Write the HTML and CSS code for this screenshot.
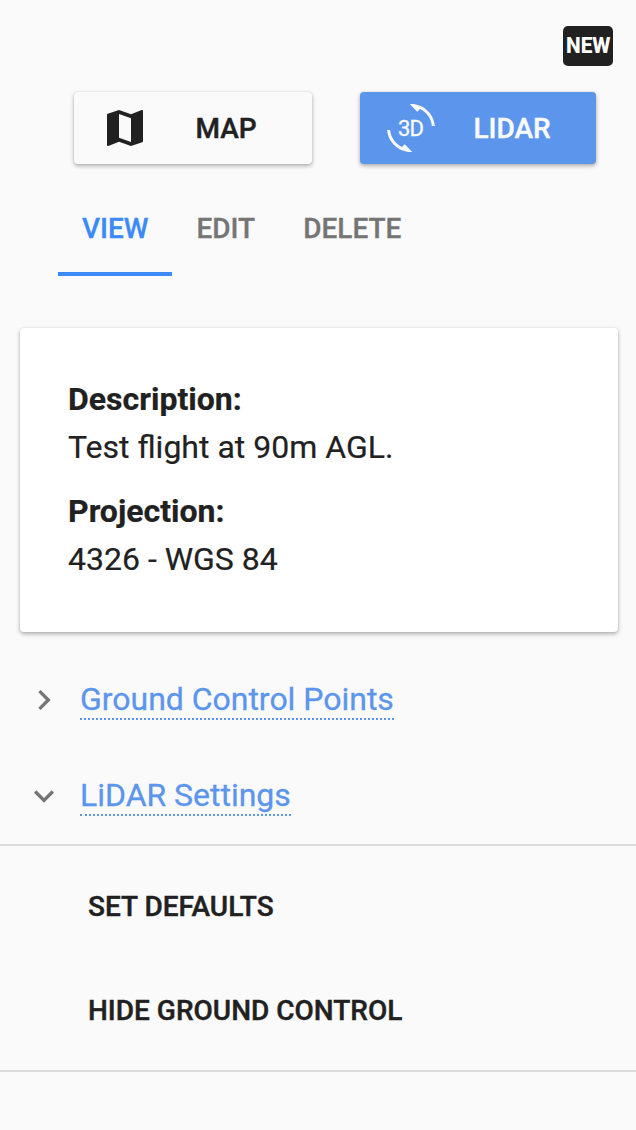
FILE: index.html
```html
<!DOCTYPE html>
<html lang="en">
<head>
<meta charset="utf-8">
<title>Flight</title>
<link rel="stylesheet" href="styles.css">
</head>
<body>
<main class="panel">
  <header class="top">
    <svg class="badge" viewBox="0 0 50 40"><text class="badge-text" x="3" y="27.3" textLength="44.5" lengthAdjust="spacingAndGlyphs">NEW</text></svg>
  </header>
  <div class="modes">
    <button class="mode mode-map">
      <svg class="mode-icon" viewBox="0 0 24 24"><path fill="currentColor" d="M20.5 3l-.16.03L15 5.1 9 3 3.36 4.9c-.21.07-.36.25-.36.48V20.5c0 .28.22.5.5.5l.16-.03L9 18.9l6 2.1 5.64-1.9c.21-.07.36-.25.36-.48V3.5c0-.28-.22-.5-.5-.5zM15 19l-6-2.11V5l6 2.11V19z"/></svg>
      <span class="mode-label">MAP</span>
    </button>
    <button class="mode mode-lidar">
      <svg class="mode-icon" viewBox="0 0 48 48"><path fill="currentColor" transform="scale(2)" d="M7.52 21.48C4.25 19.94 1.91 16.76 1.55 13H.05C.56 19.16 5.71 24 12 24l.66-.03-3.81-3.81-1.33 1.32zM12 0l-.66.03 3.81 3.81 1.33-1.33c3.27 1.55 5.61 4.72 5.96 8.48h1.5C23.44 4.84 18.29 0 12 0z"/><text class="icon-text" x="24" y="32" text-anchor="middle" textLength="26">3D</text></svg>
      <span class="mode-label">LIDAR</span>
    </button>
  </div>
  <nav class="tabs">
    <a class="tab active">VIEW</a>
    <a class="tab">EDIT</a>
    <a class="tab">DELETE</a>
  </nav>
  <section class="card">
    <p class="field"><b>Description:</b><br>Test flight at 90m AGL.</p>
    <p class="field"><b>Projection:</b><br>4326 - WGS 84</p>
  </section>
  <div class="row">
    <svg class="chevron" viewBox="0 0 24 24"><path fill="currentColor" d="M10 6L8.59 7.41 13.17 12l-4.58 4.59L10 18l6-6z"/></svg>
    <a class="link">Ground Control Points</a>
  </div>
  <div class="row">
    <svg class="chevron" viewBox="0 0 24 24"><path fill="currentColor" d="M16.59 8.59L12 13.17 7.41 8.59 6 10l6 6 6-6z"/></svg>
    <a class="link">LiDAR Settings</a>
  </div>
  <div class="settings">
    <a class="action">SET DEFAULTS</a>
    <a class="action">HIDE GROUND CONTROL</a>
  </div>
</main>
</body>
</html>
```
FILE: styles.css
```css
* { box-sizing: border-box; }
body {
  margin: 0;
  background: #fafafa;
  color: #212121;
  font-family: Roboto, "Liberation Sans", sans-serif;
}
.panel { height: 1130px; overflow: hidden; }
.top {
  display: flex;
  justify-content: flex-end;
  padding: 26px 23px 0 0;
}
.badge {
  width: 50px;
  height: 40px;
  border-radius: 5px;
  background: #212121;
}
.badge-text { font: 800 21.5px Roboto, sans-serif; fill: #fff; }
.modes {
  display: flex;
  gap: 48px;
  padding: 26px 40px 0 74px;
}
.mode {
  display: flex;
  align-items: center;
  height: 72px;
  border: 0;
  border-radius: 4px;
  padding: 0 0 0 27px;
  background: #fafafa;
  color: #212121;
  font: 500 28px/72px Roboto, sans-serif;
  box-shadow: 0 2px 4px rgba(0, 0, 0, .3), 0 0 2px rgba(0, 0, 0, .1);
}
.mode-map { width: 238px; }
.mode-lidar { width: 236px; background: #5c95ec; color: #fafafa; }
.mode-icon { width: 48px; height: 48px; flex: none; }
.mode-label {
  margin-left: 46.5px;
  padding-top: 2px;
  -webkit-text-stroke: .4px currentColor;
}
.mode-lidar .mode-label { margin-left: 38.5px; }
.icon-text { font: 400 22px Roboto, sans-serif; fill: #fafafa; stroke: #fafafa; stroke-width: .3px; }
.tabs {
  display: flex;
  height: 112px;
  padding: 0 0 0 58px;
}
.tab {
  padding: 0 24px;
  color: #757575;
  font-size: 28px;
  font-weight: 500;
  line-height: 130px;
  -webkit-text-stroke: .3px currentColor;
}
.tab.active { color: #3b8af8; border-bottom: 4px solid #3b8af8; }
.card {
  width: 598px;
  height: 304px;
  margin: 52px 0 0 20px;
  padding: 47px 48px 0;
  border-radius: 4px;
  background: #fff;
  font-size: 32px;
  line-height: 48px;
  box-shadow: 0 2px 4px rgba(0, 0, 0, .3), 0 0 2px rgba(0, 0, 0, .1);
}
.field { margin: 0 0 16px; -webkit-text-stroke: .2px currentColor; }
.row {
  display: flex;
  align-items: flex-start;
  height: 96px;
  padding: 48px 0 0 24px;
}
.chevron { width: 40px; height: 40px; color: #757575; }
.link {
  height: 40px;
  margin-left: 16px;
  border-bottom: 2px dotted #5c95ec;
  color: #5c95ec;
  font-size: 32px;
  line-height: 38px;
  letter-spacing: -.02px;
  -webkit-text-stroke: .3px currentColor;
}
.settings {
  height: 228px;
  margin-top: 20px;
  padding: 8px 0 0 88px;
  border: solid #dcdcdc;
  border-width: 2px 0;
}
.action {
  display: block;
  height: 104px;
  font-size: 28px;
  font-weight: 500;
  line-height: 106px;
  -webkit-text-stroke: .4px currentColor;
}
```
